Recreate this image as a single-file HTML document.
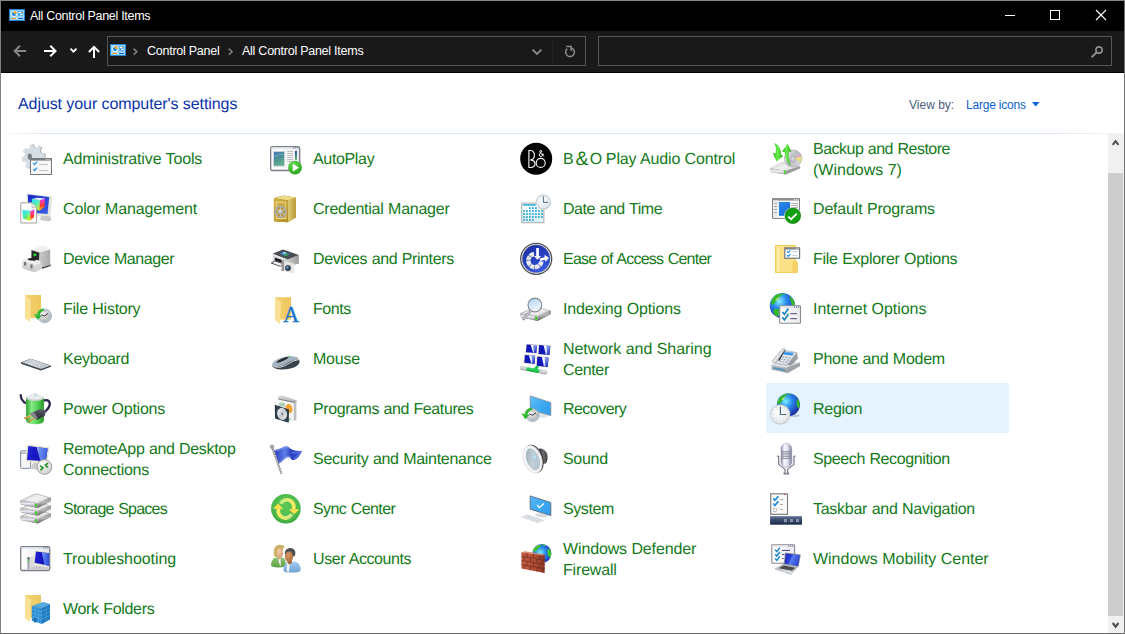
<!DOCTYPE html>
<html><head><meta charset="utf-8"><title>All Control Panel Items</title>
<style>
html,body{margin:0;padding:0;}
body{width:1125px;height:634px;overflow:hidden;background:#fff;position:relative;font-family:"Liberation Sans",sans-serif;}
.abs{position:absolute;}
.abs svg,svg.abs{display:block}
.ic{position:absolute;width:32px;height:32px;}
.ic svg{display:block;overflow:visible}
.lb{text-rendering:geometricPrecision;position:absolute;font-size:16px;line-height:20px;height:20px;color:#147a1a;white-space:nowrap;}
#title{position:absolute;left:0;top:0;width:1125px;height:31px;background:#000;}
#nav{position:absolute;left:0;top:31px;width:1125px;height:41px;background:#191919;border-bottom:1px solid #000;}
#frame{position:absolute;left:0;top:0;width:1123px;height:632px;border:1px solid;border-color:#858585 #727272 #6c6c6c #808080;pointer-events:none;z-index:10}
.wt{position:absolute;color:#fff;font-size:12.5px;white-space:nowrap;}
#addr{position:absolute;left:107px;top:36px;width:477px;height:28px;border:1px solid #555;}
#search{position:absolute;left:598px;top:36px;width:512px;height:28px;border:1px solid #555;}
#heading{text-rendering:geometricPrecision;position:absolute;left:18px;top:95px;letter-spacing:-0.08px;font-size:16px;line-height:20px;color:#0a34a8;white-space:nowrap;}
#sep{position:absolute;left:1px;top:133px;width:1123px;height:1px;background:linear-gradient(90deg,#ffffff 0%,#d8e5f4 4%,#d8e5f4 93%,#f6f9fd 100%);}
#hl{position:absolute;left:766px;top:383px;width:243px;height:50px;background:#e5f3ff;}
#sbar{position:absolute;left:1108px;top:134px;width:16px;height:499px;background:#f0f0f0;}
#thumb{position:absolute;left:1108px;top:173px;width:15px;height:443px;background:#cdcdcd;}

</style></head><body>
<div id="title"></div>
<div id="nav"></div>
<div class="abs" style="left:9px;top:9px;width:16px;height:12px"><svg width="16" height="12" viewBox="0 0 16 12"><rect x="0" y="0" width="16" height="12" fill="#2587d4"/><rect x="1" y="1" width="14" height="10" fill="#9ad4f8"/><rect x="9" y="2" width="5" height="5" fill="#5fb3ec"/><circle cx="5" cy="5" r="2.9" fill="#e8f4fd"/><circle cx="5" cy="5" r="2.1" fill="#1f86dc"/><path d="M5 5 L5 1.7 A3.3 3.3 0 0 1 8.1 4.4 Z" fill="#fbaa19"/><rect x="10" y="3" width="3" height="1" fill="#fff"/><rect x="12" y="3" width="1" height="1" fill="#f59a1a"/><rect x="11" y="5" width="2.4" height="1" fill="#fff"/><rect x="10" y="5" width="1" height="1" fill="#2a7fd0"/><rect x="2" y="9" width="5" height="1" fill="#f59a1a"/><rect x="7" y="9" width="1.6" height="1" fill="#fff"/><rect x="9" y="9" width="5" height="1" fill="#1565c8"/></svg></div>
<div class="wt" id="t1" style="left:30px;top:9px;letter-spacing:-0.3px">All Control Panel Items</div>
<svg class="abs" style="left:990px;top:1px" width="134" height="30" viewBox="0 0 134 30" fill="none" stroke="#fff" stroke-width="1">
<path d="M15 14.5 H25"/><rect x="60.5" y="9.5" width="9" height="9"/><path d="M106 9 L116 19 M116 9 L106 19" stroke-width="1.1"/></svg>
<svg class="abs" style="left:8px;top:38px" width="100" height="28" viewBox="0 0 100 28" fill="none" stroke-width="2">
<path d="M18.2 13 H7 M11.9 7.8 L6.7 13 L11.9 18.2" stroke="#858585"/>
<path d="M36 13 H47.2 M42.3 7.8 L47.5 13 L42.3 18.2" stroke="#fff"/>
<path d="M62.5 10.6 L65.5 13.6 L68.5 10.6" stroke="#fff" stroke-width="1.9"/>
<path d="M86 20 V9 M80.9 14 L86 8.9 L91.1 14" stroke="#fff"/>
</svg>
<div id="addr"></div>
<div id="search"></div>
<div class="abs" style="left:110px;top:44px;width:16px;height:12px"><svg width="16" height="12" viewBox="0 0 16 12"><rect x="0" y="0" width="16" height="12" fill="#2587d4"/><rect x="1" y="1" width="14" height="10" fill="#9ad4f8"/><rect x="9" y="2" width="5" height="5" fill="#5fb3ec"/><circle cx="5" cy="5" r="2.9" fill="#e8f4fd"/><circle cx="5" cy="5" r="2.1" fill="#1f86dc"/><path d="M5 5 L5 1.7 A3.3 3.3 0 0 1 8.1 4.4 Z" fill="#fbaa19"/><rect x="10" y="3" width="3" height="1" fill="#fff"/><rect x="12" y="3" width="1" height="1" fill="#f59a1a"/><rect x="11" y="5" width="2.4" height="1" fill="#fff"/><rect x="10" y="5" width="1" height="1" fill="#2a7fd0"/><rect x="2" y="9" width="5" height="1" fill="#f59a1a"/><rect x="7" y="9" width="1.6" height="1" fill="#fff"/><rect x="9" y="9" width="5" height="1" fill="#1565c8"/></svg></div>
<svg class="abs" style="left:130px;top:46px" width="110" height="12" viewBox="0 0 110 12" fill="none" stroke="#808080" stroke-width="1.6">
<path d="M3.6 2.6 L6.8 5.7 L3.6 8.8"/><path d="M98.8 2.6 L102 5.7 L98.8 8.8"/></svg>
<div class="wt" id="t2" style="left:147px;top:44px;letter-spacing:-0.25px">Control Panel</div>
<div class="wt" id="t3" style="left:242px;top:44px;letter-spacing:-0.25px">All Control Panel Items</div>
<svg class="abs" style="left:528px;top:40px" width="56" height="24" viewBox="0 0 56 24" fill="none" stroke="#8c8c8c" stroke-width="1.8">
<path d="M4.6 9.6 L9 14 L13.4 9.6"/>
<path d="M24.5 0 V24" stroke="#232323" stroke-width="1"/>
<path d="M43.2 7.9 A4.4 4.4 0 1 1 39.3 8.7" stroke-width="1.5"/><path d="M38.3 6.5 H43.2 V11" stroke-width="1.5"/></svg>
<svg class="abs" style="left:1089px;top:44px" width="16" height="16" viewBox="0 0 16 16" fill="none" stroke="#8f8f8f" stroke-width="1.6">
<circle cx="10" cy="6" r="3.1"/><path d="M7.6 8.4 L2.6 13.2" stroke-width="1.9"/></svg>
<div id="heading">Adjust your computer's settings</div>
<div class="abs" id="vb" style="left:909px;top:98px;font-size:12px;line-height:14px;color:#4c607a;white-space:nowrap">View by:</div>
<div class="abs" id="li" style="left:966px;top:98px;letter-spacing:-0.2px;font-size:12px;line-height:14px;color:#0b62d2;white-space:nowrap">Large icons</div>
<svg class="abs" style="left:1032px;top:102px" width="8" height="5" viewBox="0 0 8 5"><path d="M0 0 H7.4 L3.7 4.4 Z" fill="#0b62d2"/></svg>
<div id="sep"></div>
<div id="hl"></div>
<div id="sbar"></div>
<div id="thumb"></div>
<svg class="abs" style="left:1108px;top:134px" width="15" height="18" viewBox="0 0 15 18" fill="none" stroke="#505050" stroke-width="2.1"><path d="M4.7 10.9 L7.6 7.2 L10.5 10.9"/></svg>
<svg class="abs" style="left:1108px;top:616px" width="15" height="17" viewBox="0 0 15 17" fill="none" stroke="#505050" stroke-width="2.1"><path d="M4.7 7 L7.6 10.7 L10.5 7"/></svg>
<div id="frame"></div>

<div class="ic" style="left:20px;top:143px"><svg width="32" height="32" viewBox="0 0 32 32">
<path d="M10.6 5.3 L10.4 1.9 L14.0 1.2 L14.8 4.4 L17.4 5.0 L19.3 2.5 L22.3 4.8 L20.9 7.8 L22.3 10.2 L25.3 10.0 L25.9 14.0 L23.0 14.9 L22.4 17.7 L24.7 19.9 L22.6 23.2 L20.0 21.6 L17.8 23.1 L18.0 26.5 L14.4 27.2 L13.6 24.0 L11.0 23.4 L9.1 25.9 L6.1 23.6 L7.5 20.6 L6.1 18.2 L3.1 18.4 L2.5 14.4 L5.4 13.5 L6.0 10.7 L3.7 8.5 L5.8 5.2 L8.4 6.8Z" fill="#a4abb2"/>
<path d="M9.6 5.3 L9.4 1.9 L13.0 1.2 L13.8 4.4 L16.4 5.0 L18.3 2.5 L21.3 4.8 L19.9 7.8 L21.3 10.2 L24.3 10.0 L24.9 14.0 L22.0 14.9 L21.4 17.7 L23.7 19.9 L21.6 23.2 L19.0 21.6 L16.8 23.1 L17.0 26.5 L13.4 27.2 L12.6 24.0 L10.0 23.4 L8.1 25.9 L5.1 23.6 L6.5 20.6 L5.1 18.2 L2.1 18.4 L1.5 14.4 L4.4 13.5 L5.0 10.7 L2.7 8.5 L4.8 5.2 L7.4 6.8Z" fill="#d6dde4"/>
<ellipse cx="9.8" cy="13.6" rx="2.1" ry="3.2" fill="#7b7f84"/>
<rect x="10.5" y="15.5" width="21" height="16" fill="#f7f7f7" stroke="#777b80" stroke-width="1"/>
<rect x="11" y="16" width="20" height="1.6" fill="#777b80"/>
<rect x="25.6" y="16.3" width="1" height="0.9" fill="#fff"/><rect x="27.4" y="16.3" width="1" height="0.9" fill="#fff"/><rect x="29.2" y="16.3" width="1" height="0.9" fill="#fff"/>
<path d="M13.2 20 L14.6 21.5 L17.2 18.6" fill="none" stroke="#2f96ef" stroke-width="1.3"/>
<path d="M13.2 26 L14.6 27.5 L17.2 24.6" fill="none" stroke="#2f96ef" stroke-width="1.3"/>
<rect x="19" y="21" width="9" height="1" fill="#c2c4c6"/><rect x="19" y="27" width="9" height="1" fill="#c2c4c6"/>
</svg></div>
<div class="lb" style="left:63px;top:150px;letter-spacing:-0.15px;word-spacing:0.15px">Administrative Tools</div>
<div class="ic" style="left:20px;top:193px"><svg width="32" height="32" viewBox="0 0 32 32">
<defs>
<linearGradient id="cmL" x1="0" y1="0" x2="1" y2="0"><stop offset="0" stop-color="#19e04a"/><stop offset="1" stop-color="#f4f41a"/></linearGradient>
<linearGradient id="cmT" x1="0" y1="0" x2="0.3" y2="1"><stop offset="0" stop-color="#35e8ff"/><stop offset="0.45" stop-color="#35e8ff" stop-opacity="0.7"/><stop offset="1" stop-color="#35e8ff" stop-opacity="0"/></linearGradient>
<linearGradient id="cmR" x1="0" y1="0" x2="0" y2="1"><stop offset="0" stop-color="#f23cf0"/><stop offset="0.6" stop-color="#ff3a2a"/><stop offset="1" stop-color="#ffd21a"/></linearGradient>
<linearGradient id="cmS" x1="0" y1="0" x2="1" y2="1"><stop offset="0" stop-color="#1527c8"/><stop offset="1" stop-color="#3c62e6"/></linearGradient>
</defs>
<path d="M21 22 L30 22 L31.5 27 L29 28.5 L20 27 Z" fill="#c9c9c7"/>
<path d="M6.3 0.2 L32 3.4 L30.6 23 L7.2 23 Z" fill="#e4e4de"/>
<path d="M7.8 1.4 L29.2 4 L27.6 21 L8.6 19.6 Z" fill="url(#cmS)"/>
<g>
<path d="M11.8 6 L20 7.2 L19.6 17.8 L12.6 15.6 Z" fill="url(#cmL)"/><path d="M11.8 6 L20 7.2 L19.6 17.8 L12.6 15.6 Z" fill="url(#cmT)"/>
<path d="M20 7.2 L25 5.6 L24.6 13.8 L19.6 17.8 Z" fill="url(#cmR)"/>
<path d="M11.8 6 L17.4 4.8 L25 5.6 L20 7.2 Z" fill="#d9f3ff"/>
</g>
<path d="M0.8 9.8 H12 L16.6 14.4 V30 H0.8 Z" fill="#fdfdfd" stroke="#a3a3a3" stroke-width="1"/>
<path d="M12 9.8 V14.4 H16.6" fill="#ececec" stroke="#b5b5b5" stroke-width="0.8"/>
<g>
<path d="M2.6 17 L10.4 17.8 L10 27.8 L3.2 25.6 Z" fill="url(#cmL)"/><path d="M2.6 17 L10.4 17.8 L10 27.8 L3.2 25.6 Z" fill="url(#cmT)"/>
<path d="M10.4 17.8 L14.4 16.6 L14 24.6 L10 27.8 Z" fill="url(#cmR)"/>
<path d="M2.6 17 L7.4 16 L14.4 16.6 L10.4 17.8 Z" fill="#d9f3ff"/>
</g>
</svg></div>
<div class="lb" style="left:63px;top:200px;letter-spacing:-0.133px;word-spacing:0.133px">Color Management</div>
<div class="ic" style="left:20px;top:243px"><svg width="32" height="32" viewBox="0 0 32 32">
<defs><linearGradient id="dmR" x1="0" y1="0" x2="1" y2="0"><stop offset="0" stop-color="#c9c9cb"/><stop offset="1" stop-color="#a9a9ac"/></linearGradient>
<linearGradient id="dmF" x1="0" y1="0" x2="0" y2="1"><stop offset="0" stop-color="#e6e6e6"/><stop offset="1" stop-color="#c3c3c5"/></linearGradient></defs>
<path d="M22 24.2 L30.6 21.6 L30.6 23 L22 25.8 Z" fill="#2b2b2b"/>
<path d="M11.4 6.8 L22.4 2.8 Q28 3.4 30.2 6.6 L19.4 9.6 Z" fill="#efefef"/>
<path d="M19.4 9.6 L30.2 6.6 L30.2 22 L21.4 24.6 L19.4 18 Z" fill="url(#dmR)"/>
<path d="M11.4 6.9 L19.4 9.6 L19.2 17.4 L11.4 15.8 Z" fill="#3b3b3d"/>
<path d="M12.4 8.4 L18.4 10.4 L18.3 16.4 L12.4 15.2 Z" fill="#232325"/>
<rect x="13.5" y="10.4" width="2.8" height="2.8" fill="#22d63c"/>
<path d="M2.2 17.2 L8 15.2 L21.6 19.8 L15.6 22 Z" fill="#ededed"/>
<path d="M7.2 15.8 L11.4 15 L16.8 16.4 L15 17.8 L9 17.2 Z" fill="#1d1d1d"/>
<path d="M2.2 17.2 L15.6 22 L15.6 29.2 Q8 28 2.2 25 Z" fill="url(#dmF)"/>
<path d="M15.6 22 L21.6 19.8 L21.8 25.8 L15.6 29.2 Z" fill="#d5d5d7"/>
<rect x="4" y="18.8" width="2.2" height="4" rx="1" fill="#77777a"/>
<rect x="10.4" y="21.2" width="2.2" height="4.2" rx="1" fill="#77777a"/>
</svg></div>
<div class="lb" style="left:63px;top:250px;letter-spacing:-0.401px;word-spacing:0.401px">Device Manager</div>
<div class="ic" style="left:20px;top:293px"><svg width="32" height="32" viewBox="0 0 32 32">
<defs><linearGradient id="fhB" x1="0" y1="0" x2="1" y2="0"><stop offset="0" stop-color="#f3d272"/><stop offset="1" stop-color="#eec65c"/></linearGradient>
<radialGradient id="fhC" cx="0.35" cy="0.3" r="0.8"><stop offset="0" stop-color="#f2f2f2"/><stop offset="1" stop-color="#b4b4b4"/></radialGradient></defs>
<rect x="5.2" y="2" width="15.8" height="23" fill="url(#fhB)"/>
<path d="M5.2 2 L10.9 7.2 L10.2 29 L5.2 25.4 Z" fill="#f9e296"/>
<circle cx="24.7" cy="22.9" r="7" fill="#b3c4d2" stroke="#8fa2b2" stroke-width="0.5"/>
<circle cx="24.7" cy="22.9" r="5.7" fill="url(#fhC)"/>
<g stroke="#8a8a8a" stroke-width="0.8"><path d="M24.7 18 v1.2 M24.7 26.6 v1.2 M19.8 22.9 h1.2 M28.4 22.9 h1.2"/></g>
<path d="M21.6 22 L24.7 23 L28 20.4" fill="none" stroke="#333" stroke-width="1"/>
<path d="M23.4 15.4 Q17.6 16.4 16.8 21.6 L14 20.8 L17.4 26.8 L22 22.8 L19.6 22.2 Q20.2 18.6 24.2 17.6 Z" fill="#2db32d"/>
<path d="M23.4 15.4 Q17.6 16.4 16.8 21.6 L14 20.8 L15 22.6 L17.8 23 Q18 17.6 23.4 15.4 Z" fill="#5fd25a" opacity="0.7"/>
</svg></div>
<div class="lb" style="left:63px;top:300px;letter-spacing:-0.241px;word-spacing:0.241px">File History</div>
<div class="ic" style="left:20px;top:343px"><svg width="32" height="32" viewBox="0 0 32 32">
<defs><linearGradient id="kbT" x1="0" y1="0" x2="1" y2="0.3"><stop offset="0" stop-color="#a4abb2"/><stop offset="0.45" stop-color="#ccd1d5"/><stop offset="1" stop-color="#b3b9bf"/></linearGradient></defs>
<path d="M1 19.2 L10.6 15.8 L31 22.4 L31 23.8 L20.8 27.6 L1 20.8 Z" fill="#34404a"/>
<path d="M1.2 19.2 L10.6 15.8 L31 22.4 L20.8 26 Z" fill="url(#kbT)"/>
<g stroke="#e9ecee" stroke-width="0.9" stroke-dasharray="1.4 1.5" fill="none">
<path d="M9.6 17.3 L28 23.2"/><path d="M7.4 18.3 L25.8 24.2"/><path d="M5.2 19.3 L22.6 25"/></g>
</svg></div>
<div class="lb" style="left:63px;top:350px;letter-spacing:-0.286px;word-spacing:0.286px">Keyboard</div>
<div class="ic" style="left:20px;top:393px"><svg width="32" height="32" viewBox="0 0 32 32">
<defs><linearGradient id="pwG" x1="0" y1="0" x2="1" y2="0"><stop offset="0" stop-color="#27a027"/><stop offset="0.3" stop-color="#8aea8a"/><stop offset="0.7" stop-color="#4ccb4c"/><stop offset="1" stop-color="#229422"/></linearGradient>
<linearGradient id="pwP" x1="0" y1="0" x2="0" y2="1"><stop offset="0" stop-color="#5e5e6a"/><stop offset="1" stop-color="#26262e"/></linearGradient>
<linearGradient id="pwA" x1="0" y1="0" x2="0" y2="1"><stop offset="0" stop-color="#f0cc80"/><stop offset="1" stop-color="#b07a22"/></linearGradient></defs>
<path d="M0.6 1.2 Q0.8 7.8 6 10.2" fill="none" stroke="#2b264e" stroke-width="2.2"/>
<path d="M23.4 7.6 Q28.6 6 29.8 10.2 Q30.2 14.4 25 18.6" fill="none" stroke="#2b264e" stroke-width="2.4"/>
<path d="M6.1 5 V27.6 Q6.1 31.2 15 31.2 Q23.9 31.2 23.9 27.6 V5 Z" fill="url(#pwG)"/>
<ellipse cx="15" cy="4.8" rx="8.9" ry="3" fill="#cfd3d6"/>
<ellipse cx="15" cy="4.2" rx="7" ry="2.2" fill="#eceef0"/>
<ellipse cx="15" cy="2.2" rx="3.8" ry="1.7" fill="#f6f7f8" stroke="#c2c6ca" stroke-width="0.4"/>
<ellipse cx="15.4" cy="1.9" rx="1.3" ry="0.6" fill="#6ebcec"/>
<path d="M4 24.4 L11 21.6 L11.8 23.4 L4.8 26.4 Z" fill="url(#pwA)"/>
<path d="M8 27.2 L15 23.8 L15.8 25.6 L8.8 29.2 Z" fill="url(#pwA)"/>
<path d="M10.2 20.8 L18.6 16.4 Q22 15.8 26 18 L24.6 23 L17 26.8 L13.8 24.8 Z" fill="url(#pwP)"/>
<path d="M10.2 20.8 L13.8 19 L17.4 24.2 L17 26.8 L13.8 24.8 Z" fill="#858590"/>
</svg></div>
<div class="lb" style="left:63px;top:400px;letter-spacing:-0.247px;word-spacing:0.247px">Power Options</div>
<div class="ic" style="left:20px;top:443px"><svg width="32" height="32" viewBox="0 0 32 32">
<defs><linearGradient id="raS" x1="0" y1="0" x2="1" y2="0.1"><stop offset="0" stop-color="#2222d8"/><stop offset="1" stop-color="#0c0ea8"/></linearGradient>
<linearGradient id="raL" x1="0" y1="0" x2="1" y2="0.2"><stop offset="0" stop-color="#b9cdf8"/><stop offset="0.25" stop-color="#6f92ee"/><stop offset="1" stop-color="#3d5fe0"/></linearGradient>
<radialGradient id="raB" cx="0.35" cy="0.3" r="0.9"><stop offset="0" stop-color="#ffffff"/><stop offset="1" stop-color="#c4c4c4"/></radialGradient></defs>
<rect x="0.6" y="7.8" width="10" height="17.6" rx="0.8" fill="#f7f7f7" stroke="#7f8aa0" stroke-width="1"/>
<rect x="1" y="9.6" width="9" height="0.9" fill="#6f7a92"/>
<path d="M13 19.4 L17.4 19.6 L19 27.6 L10.6 25.6 Z" fill="#cdcdcd"/>
<path d="M6.8 1.4 L29.4 4.3 L27.1 20 L5.5 18.4 Z" fill="#e4e2d2"/>
<path d="M8.3 2.9 L27.6 5.4 L25.8 18.2 L7 16.9 Z" fill="url(#raS)"/>
<path d="M16.6 4 L27.6 5.4 L25.8 18.2 L20.2 17.8 Z" fill="url(#raL)"/>
<circle cx="24.4" cy="24" r="7.4" fill="url(#raB)" stroke="#9a9a9a" stroke-width="0.9"/>
<path d="M20.2 22.6 L23 24.8 L20.4 27.4 M28 20.2 L25.4 22.2 L27.8 24.6" fill="none" stroke="#2c962c" stroke-width="1.7"/>
</svg></div>
<div class="lb" style="left:63px;top:440px;letter-spacing:-0.333px;word-spacing:0.333px">RemoteApp and Desktop</div>
<div class="lb" style="left:63px;top:461px;letter-spacing:-0.28px;word-spacing:0.28px">Connections</div>
<div class="ic" style="left:20px;top:493px"><svg width="32" height="32" viewBox="0 0 32 32">
<defs>
<linearGradient id="stT" x1="0" y1="0" x2="1" y2="1"><stop offset="0" stop-color="#d5d5d5"/><stop offset="0.5" stop-color="#f2f2f2"/><stop offset="1" stop-color="#dcdcdc"/></linearGradient>
<linearGradient id="stF" x1="0" y1="0" x2="0" y2="1"><stop offset="0" stop-color="#a2a2a6"/><stop offset="0.45" stop-color="#e9e9f2"/><stop offset="1" stop-color="#8e8e92"/></linearGradient>
<linearGradient id="stR" x1="0" y1="0" x2="0" y2="1"><stop offset="0" stop-color="#8c8c8e"/><stop offset="0.45" stop-color="#b9b9bb"/><stop offset="1" stop-color="#5e5e62"/></linearGradient>
</defs><g transform="translate(0 15.6)">
<path d="M0.6 7.4 Q0.2 9 1 11.4 L17.6 15 L30.6 8.4 Q31.4 6.4 30.6 4.6 L17.6 10.8 Z" fill="#6e6e72"/>
<path d="M17.6 10.8 L30.6 4.6 Q31.2 6.4 30.6 8.2 L17.6 14.8 Z" fill="url(#stR)"/>
<path d="M0.6 7.2 Q0 9 1 11.2 L17.6 14.8 L17.6 10.8 Z" fill="url(#stF)"/>
<path d="M0.6 7.2 L14.6 0.6 Q16 0.2 17.4 0.6 L30.6 4.6 L17.6 10.8 Z" fill="#c4c4c6"/><path d="M3.6 7 L15.2 1.6 Q16 1.3 17 1.6 L27.8 4.8 L17.4 9.7 Z" fill="url(#stT)"/>
<rect x="15.2" y="10.6" width="1.9" height="3.4" fill="#35d312"/>
<rect x="14.7" y="10.5" width="0.5" height="3.4" fill="#7a4a9a" opacity="0.6"/>
</g><g transform="translate(0 7.8)">
<path d="M0.6 7.4 Q0.2 9 1 11.4 L17.6 15 L30.6 8.4 Q31.4 6.4 30.6 4.6 L17.6 10.8 Z" fill="#6e6e72"/>
<path d="M17.6 10.8 L30.6 4.6 Q31.2 6.4 30.6 8.2 L17.6 14.8 Z" fill="url(#stR)"/>
<path d="M0.6 7.2 Q0 9 1 11.2 L17.6 14.8 L17.6 10.8 Z" fill="url(#stF)"/>
<path d="M0.6 7.2 L14.6 0.6 Q16 0.2 17.4 0.6 L30.6 4.6 L17.6 10.8 Z" fill="#c4c4c6"/><path d="M3.6 7 L15.2 1.6 Q16 1.3 17 1.6 L27.8 4.8 L17.4 9.7 Z" fill="url(#stT)"/>
<rect x="15.2" y="10.6" width="1.9" height="3.4" fill="#35d312"/>
<rect x="14.7" y="10.5" width="0.5" height="3.4" fill="#7a4a9a" opacity="0.6"/>
</g><g transform="translate(0 0)">
<path d="M0.6 7.4 Q0.2 9 1 11.4 L17.6 15 L30.6 8.4 Q31.4 6.4 30.6 4.6 L17.6 10.8 Z" fill="#6e6e72"/>
<path d="M17.6 10.8 L30.6 4.6 Q31.2 6.4 30.6 8.2 L17.6 14.8 Z" fill="url(#stR)"/>
<path d="M0.6 7.2 Q0 9 1 11.2 L17.6 14.8 L17.6 10.8 Z" fill="url(#stF)"/>
<path d="M0.6 7.2 L14.6 0.6 Q16 0.2 17.4 0.6 L30.6 4.6 L17.6 10.8 Z" fill="#c4c4c6"/><path d="M3.6 7 L15.2 1.6 Q16 1.3 17 1.6 L27.8 4.8 L17.4 9.7 Z" fill="url(#stT)"/>
<rect x="15.2" y="10.6" width="1.9" height="3.4" fill="#35d312"/>
<rect x="14.7" y="10.5" width="0.5" height="3.4" fill="#7a4a9a" opacity="0.6"/>
</g></svg></div>
<div class="lb" style="left:63px;top:500px;letter-spacing:-0.759px;word-spacing:0.759px">Storage Spaces</div>
<div class="ic" style="left:20px;top:543px"><svg width="32" height="32" viewBox="0 0 32 32">
<defs><linearGradient id="trW" x1="0" y1="0" x2="1" y2="0"><stop offset="0" stop-color="#ffffff"/><stop offset="1" stop-color="#e4e4e6"/></linearGradient>
<linearGradient id="trS" x1="0" y1="0" x2="1" y2="0.1"><stop offset="0" stop-color="#2020d6"/><stop offset="1" stop-color="#0c0ea8"/></linearGradient>
<linearGradient id="trL" x1="0" y1="0" x2="1" y2="0.2"><stop offset="0" stop-color="#a9c0f6"/><stop offset="0.3" stop-color="#5f84ea"/><stop offset="1" stop-color="#2f4fd8"/></linearGradient></defs>
<rect x="0.7" y="3.7" width="29" height="23.8" rx="1.4" fill="url(#trW)" stroke="#797d86" stroke-width="1.3"/>
<rect x="1.3" y="4.3" width="27.8" height="1.5" fill="#dde3ec"/>
<rect x="23.2" y="4.3" width="1.1" height="1" fill="#4c5b78"/><rect x="25.2" y="4.3" width="1.1" height="1" fill="#4c5b78"/><rect x="27.2" y="4.3" width="1.1" height="1" fill="#4c5b78"/>
<path d="M9.6 14.4 L14.6 12.6 L14.6 24 L9.6 26 Z" fill="#dcdcdc"/>
<rect x="7.4" y="14" width="2.2" height="12.4" rx="0.8" fill="#a3a3ad"/>
<rect x="7.6" y="14.4" width="1.8" height="2" fill="#55555c"/>
<rect x="7.8" y="16.4" width="1.5" height="1.6" fill="#35d035"/>
<path d="M10.6 25 L17 22.4 L28.6 24.4 L28.6 26.6 L10.6 26.6 Z" fill="#c9c9cb"/>
<path d="M15.2 7.4 L29.2 9.4 L29.2 23.8 L13.6 20.6 Z" fill="#dedccd"/>
<path d="M16 8.4 L29.1 10.3 L29.1 22.8 L14.6 19.8 Z" fill="url(#trS)"/>
<path d="M22 9.3 L29.1 10.3 L29.1 22.8 L24.4 21.8 Z" fill="url(#trL)"/>
</svg></div>
<div class="lb" style="left:63px;top:550px;letter-spacing:-0.072px;word-spacing:0.072px">Troubleshooting</div>
<div class="ic" style="left:20px;top:593px"><svg width="32" height="32" viewBox="0 0 32 32">
<defs><linearGradient id="wfB" x1="0" y1="0" x2="1" y2="0"><stop offset="0" stop-color="#f3d272"/><stop offset="1" stop-color="#eec65c"/></linearGradient></defs>
<rect x="5.2" y="2" width="15.8" height="23" fill="url(#wfB)"/>
<path d="M5.2 2 L10.9 7.2 L10.2 29 L5.2 25.4 Z" fill="#f9e296"/>
<path d="M11.8 13 L23.1 8.9 L30 11.1 L21.9 14.9 Z" fill="#4aa6de"/>
<path d="M11.8 13 L21.9 14.9 L21.9 31 L11.8 27.8 Z" fill="#2f8fd2"/>
<path d="M21.9 14.9 L30 11.1 L30 26.6 L21.9 31 Z" fill="#1f7bc0"/>
<g stroke="#7cc6ee" stroke-width="0.6" fill="none" opacity="0.55">
<path d="M11.8 16.6 L21.9 18.7 L30 14.8 M11.8 20.2 L21.9 22.5 L30 18.5 M11.8 23.8 L21.9 26.3 L30 22.2"/>
<path d="M15.2 13.7 V28.8 M18.6 14.3 V29.9 M26 13 V28.8"/>
<path d="M15.4 11.7 L25.6 13.2 M19.2 10.3 L27.8 12.1"/>
</g>
<rect x="14" y="25" width="2.2" height="4.4" fill="#1b67a8"/>
</svg></div>
<div class="lb" style="left:63px;top:600px;letter-spacing:-0.316px;word-spacing:0.316px">Work Folders</div>
<div class="ic" style="left:270px;top:143px"><svg width="32" height="32" viewBox="0 0 32 32">
<defs><linearGradient id="apW" x1="0" y1="0" x2="1" y2="0"><stop offset="0" stop-color="#ffffff"/><stop offset="1" stop-color="#ececee"/></linearGradient>
<linearGradient id="apI" x1="0" y1="0" x2="0.4" y2="1"><stop offset="0" stop-color="#4a78ba"/><stop offset="0.5" stop-color="#4a9098"/><stop offset="1" stop-color="#5fae88"/></linearGradient>
<linearGradient id="apV" x1="0" y1="0" x2="0" y2="1"><stop offset="0" stop-color="#1746a8"/><stop offset="1" stop-color="#5cba58"/></linearGradient>
<radialGradient id="apP" cx="0.4" cy="0.3" r="0.8"><stop offset="0" stop-color="#6fdc58"/><stop offset="1" stop-color="#1f9a14"/></radialGradient></defs>
<rect x="0.7" y="3.7" width="29" height="23.8" rx="1.4" fill="url(#apW)" stroke="#797d86" stroke-width="1.3"/>
<rect x="1.3" y="4.3" width="27.8" height="1.5" fill="#dde3ec"/>
<rect x="23.2" y="4.3" width="1.1" height="1" fill="#4c5b78"/><rect x="25.2" y="4.3" width="1.1" height="1" fill="#4c5b78"/><rect x="27.2" y="4.3" width="1.1" height="1" fill="#4c5b78"/>
<rect x="3.6" y="8.5" width="11" height="14.6" fill="url(#apI)" stroke="#d9d2ea" stroke-width="0.8"/>
<path d="M4 13.6 Q9 10.6 14.2 11.6" fill="none" stroke="#9fc4d8" stroke-width="0.6" opacity="0.8"/>
<g fill="#b4b4b6"><rect x="17.1" y="8.1" width="5.8" height="0.8"/><rect x="17.1" y="10.1" width="5.8" height="0.8"/><rect x="17.1" y="12.2" width="5.8" height="0.8"/><rect x="17.1" y="14.2" width="5.8" height="0.8"/><rect x="17.1" y="16.2" width="5.8" height="0.8"/><rect x="17.1" y="18.2" width="5.8" height="0.8"/></g>
<rect x="25" y="7.9" width="1.9" height="9" fill="url(#apV)"/>
<circle cx="25" cy="24.7" r="6.9" fill="url(#apP)"/>
<path d="M22.8 20.8 L29 24.7 L22.8 28.6 Z" fill="#fff"/>
</svg></div>
<div class="lb" style="left:313px;top:150px;letter-spacing:-0.344px;word-spacing:0.344px">AutoPlay</div>
<div class="ic" style="left:270px;top:193px"><svg width="32" height="32" viewBox="0 0 32 32">
<defs><linearGradient id="crF" x1="0" y1="0" x2="1" y2="1"><stop offset="0" stop-color="#d6b246"/><stop offset="1" stop-color="#b38c26"/></linearGradient>
<linearGradient id="crR" x1="0" y1="0" x2="1" y2="0"><stop offset="0" stop-color="#e0cc74"/><stop offset="1" stop-color="#ba9a3a"/></linearGradient>
<radialGradient id="crH" cx="0.4" cy="0.35" r="0.7"><stop offset="0" stop-color="#e6e6e6"/><stop offset="1" stop-color="#9c9c9c"/></radialGradient></defs>
<path d="M3.9 6.4 Q3.9 5 5.4 4.6 L13.7 2.6 L24.6 4.2 Q25.8 4.4 25.8 5.6 L25.8 24.6 L18.1 29.2 L5 28.6 Q3.9 28.4 3.9 27 Z" fill="#b8942e"/>
<path d="M4.2 5.2 L13.7 2.7 L25.6 4.5 L18.1 7.2 Z" fill="#ecdc88"/>
<path d="M3.9 6 L18.1 7.2 L18.1 29.2 L5 28.6 Q3.9 28.4 3.9 27 Z" fill="url(#crF)"/>
<path d="M18.1 7.2 L25.8 4.6 L25.8 24.6 L18.1 29.2 Z" fill="url(#crR)"/>
<rect x="6.4" y="9.2" width="9.4" height="16.4" fill="none" stroke="#efe09a" stroke-width="0.9"/>
<rect x="7.2" y="10" width="7.8" height="14.8" fill="#d0b048" opacity="0.6"/>
<circle cx="10.5" cy="18.7" r="5.4" fill="#b9962f" stroke="#a9a9a9" stroke-width="1.7"/>
<g stroke="#bdbdbd" stroke-width="1.1"><path d="M10.5 13.6 V23.8 M6.1 16.2 L14.9 21.2 M6.1 21.2 L14.9 16.2"/></g>
<circle cx="10.5" cy="18.7" r="2.5" fill="url(#crH)"/>
</svg></div>
<div class="lb" style="left:313px;top:200px;letter-spacing:-0.234px;word-spacing:0.234px">Credential Manager</div>
<div class="ic" style="left:270px;top:243px"><svg width="32" height="32" viewBox="0 0 32 32">
<defs><linearGradient id="dpR" x1="0" y1="0" x2="1" y2="0"><stop offset="0" stop-color="#c6c6c8"/><stop offset="1" stop-color="#9c9c9f"/></linearGradient>
<radialGradient id="dpL" cx="0.4" cy="0.4" r="0.7"><stop offset="0" stop-color="#7fb4d8"/><stop offset="0.5" stop-color="#2e3e52"/><stop offset="1" stop-color="#15171a"/></radialGradient></defs>
<path d="M2.6 10.8 L13 6.6 L28.8 12 L28.8 20.4 L17.5 23.6 L2.9 18.4 Z" fill="#d9d9db"/>
<path d="M17.5 16.5 L28.8 12 L28.8 20.4 L17.5 23.6 Z" fill="url(#dpR)"/>
<path d="M2.6 10.8 L13 6.6 L28.8 12 L17.5 16.5 Z" fill="#4a4e53"/>
<path d="M2.6 10.8 L17.5 16.5 L17.5 17.4 L2.6 11.7 Z" fill="#f0f0f0"/>
<path d="M9.6 10.6 L14.6 9 L20 11.2 L15.4 13 Z" fill="#3c8be2"/>
<path d="M13.4 11.6 L16.6 10.4 L19 11.4 L15.4 13 Z" fill="#3aa04a"/>
<path d="M12.4 9.8 L14.6 9.1 L16.4 9.9 L14 10.8 Z" fill="#d8ecfa"/>
<path d="M4.8 14.4 L12.6 17.2 L12.6 20.2 L4.8 17.4 Z" fill="#1c1d20"/>
<path d="M1.2 20 L5 18 L13.2 20.6 L10.4 23.4 Z" fill="#f4f4f4" stroke="#3e4146" stroke-width="0.9"/>
<rect x="15.7" y="15.6" width="1.1" height="1.1" fill="#2fd04a"/>
<rect x="11.5" y="17.2" width="2.8" height="10.8" fill="#98989b"/>
<path d="M14.3 18 L24.4 20.6 L24.4 30.4 L14.3 28 Z" fill="#e9e9eb"/>
<path d="M11.5 17.2 L14.3 18 L24.4 20.6 L22 19 L13.4 16.8 Z" fill="#c9c9cb"/>
<circle cx="17.9" cy="25" r="3.5" fill="#b9b9bb"/>
<circle cx="17.9" cy="25" r="2.7" fill="url(#dpL)"/>
<rect x="20.6" y="20.6" width="2" height="0.9" fill="#d8c27a"/>
</svg></div>
<div class="lb" style="left:313px;top:250px;letter-spacing:-0.381px;word-spacing:0.381px">Devices and Printers</div>
<div class="ic" style="left:270px;top:293px"><svg width="32" height="32" viewBox="0 0 32 32">
<defs><linearGradient id="foB" x1="0" y1="0" x2="1" y2="0"><stop offset="0" stop-color="#f3d272"/><stop offset="1" stop-color="#eec65c"/></linearGradient></defs>
<rect x="5.2" y="4.2" width="15.8" height="22.4" fill="url(#foB)"/>
<path d="M5.2 4.2 L10.9 9 L10 31 L5.2 27.2 Z" fill="#f9e296"/>
<text x="12.9" y="28.8" font-family="Liberation Serif, serif" font-size="22.5" fill="#1474cc" stroke="#1474cc" stroke-width="0.35">A</text>
</svg></div>
<div class="lb" style="left:313px;top:300px;letter-spacing:-0.45px;word-spacing:0.45px">Fonts</div>
<div class="ic" style="left:270px;top:343px"><svg width="32" height="32" viewBox="0 0 32 32">
<defs><linearGradient id="moT" x1="0" y1="0" x2="1" y2="1"><stop offset="0" stop-color="#b7c4d0"/><stop offset="1" stop-color="#8fa0b0"/></linearGradient></defs>
<path d="M2.2 22 Q2 25 8 26.2 Q16 27.4 24 24.4 Q30 21.8 29.6 18 Q29 15 24 14 L10 20 Z" fill="#39424a"/>
<path d="M2.2 21.4 Q2 18.8 9 15.6 Q17 12.4 23 13.2 Q28.6 14 28.6 16.4 Q21 17 16 21 Q11 24.6 5 23.8 Q2.4 23.2 2.2 21.4 Z" fill="url(#moT)"/>
<path d="M2.4 22.2 Q4 24.6 10 24.2 Q15 23.4 19 20.4 Q24 17 28.8 16.6" fill="none" stroke="#e3e8ec" stroke-width="0.9"/>
<path d="M6.4 19.8 Q6.8 18 11 16 Q15.6 13.8 18.8 13.8 Q18 15.6 13.4 17.8 Q8.6 20.2 6.4 19.8 Z" fill="#262a2e"/>
<rect x="18.4" y="13" width="1.6" height="1.1" fill="#2fd34a"/>
</svg></div>
<div class="lb" style="left:313px;top:350px;letter-spacing:-0.25px;word-spacing:0.25px">Mouse</div>
<div class="ic" style="left:270px;top:393px"><svg width="32" height="32" viewBox="0 0 32 32">
<defs><linearGradient id="prD" x1="0" y1="0" x2="1" y2="1"><stop offset="0" stop-color="#fafafa"/><stop offset="0.5" stop-color="#c9cdd0"/><stop offset="1" stop-color="#eef0f1"/></linearGradient>
<linearGradient id="prT" x1="0" y1="0" x2="0" y2="1"><stop offset="0" stop-color="#e2e2e2"/><stop offset="1" stop-color="#a9a9ab"/></linearGradient></defs>
<path d="M8.3 6.4 L23.8 9.6 L23.8 28.4 L8.3 24 Z" fill="#f5f5f5"/>
<path d="M23.8 9.6 L26.4 8.4 L26.4 26.4 L23.8 28.4 Z" fill="#bfbfc1"/>
<path d="M8 3.4 L12.4 2.3 L27.6 7.8 L24.4 9.9 L8.2 6.6 Z" fill="url(#prT)"/>
<path d="M8.4 6 L24.2 9.4" stroke="#6a6a6c" stroke-width="0.7"/>
<path d="M8.6 10.6 Q11 9 14.8 10 L15 14 L8.6 12.4 Z" fill="#a9ceb2"/>
<ellipse cx="19" cy="15.6" rx="3.3" ry="4.7" fill="#f1a433" transform="rotate(-12 19 15.6)"/>
<path d="M18.8 25 L20.4 25.4 L20.4 28 L18.8 27.6 Z" fill="#8fc49a"/>
<path d="M4.8 11.7 L19 16.5 L18.7 29.8 L5.1 25.6 Z" fill="#27333f"/>
<path d="M5.8 13.2 L18 17.2 L17.8 28.4 L6 24.6 Z" fill="#34434f"/>
<ellipse cx="12.1" cy="20.9" rx="4.9" ry="6.1" fill="url(#prD)" transform="rotate(-14 12.1 20.9)"/>
<ellipse cx="12.2" cy="21" rx="1.1" ry="1.5" fill="#8a9298" transform="rotate(-14 12.2 21)"/>
</svg></div>
<div class="lb" style="left:313px;top:400px;letter-spacing:-0.403px;word-spacing:0.403px">Programs and Features</div>
<div class="ic" style="left:270px;top:443px"><svg width="32" height="32" viewBox="0 0 32 32">
<defs><linearGradient id="seF" x1="0" y1="0" x2="1" y2="0"><stop offset="0" stop-color="#2136b4"/><stop offset="0.42" stop-color="#5f7fea"/><stop offset="0.62" stop-color="#2a40c0"/><stop offset="1" stop-color="#3a56d6"/></linearGradient></defs>
<path d="M2.8 7.4 Q9 6.6 12.4 4.4 Q16.4 2.2 19.2 4.6 Q22.4 8.6 32 8 Q29 15.4 24.2 17 Q21.8 17.6 20.4 15.2 Q18.8 13 15.4 15.4 Q11 19.4 8 21.6 Z" fill="url(#seF)"/>
<path d="M3.6 8.4 Q9.4 7.6 12.8 5.4 Q16.2 3.4 18.6 5.4" fill="none" stroke="#8fa6f2" stroke-width="0.7"/>
<path d="M8.8 20 Q12 17.6 15 14.8 Q18.6 12 21 14.6" fill="none" stroke="#9fb4f6" stroke-width="0.7"/>
<path d="M21.4 9.6 Q26 10.4 30.4 9 Q27.8 14 24 15.6" fill="none" stroke="#7d96ee" stroke-width="0.7"/>
<path d="M2.2 4.6 L11.6 31" stroke="#8f8f93" stroke-width="2"/>
<path d="M2.2 4.6 L11.6 31" stroke="#f0f0f2" stroke-width="1" stroke-dasharray="1.3 1.3"/>
<circle cx="2" cy="3.8" r="1.7" fill="#a8a8ac" stroke="#77777b" stroke-width="0.6"/>
</svg></div>
<div class="lb" style="left:313px;top:450px;letter-spacing:-0.292px;word-spacing:0.292px">Security and Maintenance</div>
<div class="ic" style="left:270px;top:493px"><svg width="32" height="32" viewBox="0 0 32 32">
<defs><radialGradient id="syG" cx="0.5" cy="0.4" r="0.6"><stop offset="0" stop-color="#5cc85a"/><stop offset="0.8" stop-color="#4ab84a"/><stop offset="1" stop-color="#3aa63c"/></radialGradient>
<linearGradient id="syA" x1="0" y1="0" x2="1" y2="0"><stop offset="0" stop-color="#c6ec8a"/><stop offset="1" stop-color="#fdea62"/></linearGradient>
<linearGradient id="syB" x1="1" y1="0" x2="0" y2="0"><stop offset="0" stop-color="#c6ec8a"/><stop offset="1" stop-color="#fdea62"/></linearGradient></defs>
<circle cx="15.9" cy="15.8" r="14.8" fill="url(#syG)"/>
<path d="M10.6 10.8 A6.8 6.8 0 0 1 23.2 16.6" fill="none" stroke="url(#syA)" stroke-width="3.7"/>
<path d="M21.6 21 A6.8 6.8 0 0 1 9 15.2" fill="none" stroke="url(#syB)" stroke-width="3.7"/>
<path d="M18.8 16.2 H29.4 L24.1 21.2 Z" fill="#ffe04c"/>
<path d="M3 15.8 H13.4 L8 10.6 Z" fill="#ffe04c"/>
</svg></div>
<div class="lb" style="left:313px;top:500px;letter-spacing:-0.583px;word-spacing:0.583px">Sync Center</div>
<div class="ic" style="left:270px;top:543px"><svg width="32" height="32" viewBox="0 0 32 32">
<defs><linearGradient id="usG" x1="0" y1="0" x2="0" y2="1"><stop offset="0" stop-color="#8cc66e"/><stop offset="1" stop-color="#5fa04a"/></linearGradient>
<linearGradient id="usB" x1="0" y1="0" x2="0" y2="1"><stop offset="0" stop-color="#a6cdee"/><stop offset="1" stop-color="#6fa3d6"/></linearGradient>
<radialGradient id="usF1" cx="0.4" cy="0.4" r="0.7"><stop offset="0" stop-color="#f6d2b0"/><stop offset="1" stop-color="#d69c72"/></radialGradient>
<radialGradient id="usF2" cx="0.4" cy="0.4" r="0.7"><stop offset="0" stop-color="#d89a68"/><stop offset="1" stop-color="#a86a3a"/></radialGradient></defs>
<path d="M1 22.6 Q1 15.4 6.4 14.6 L12.4 14.4 Q16 15.4 16 22 Q16 24.4 8.4 24.4 Q1 24.4 1 22.6 Z" fill="url(#usG)"/>
<path d="M8 15 L10.6 15 L10.8 23.6 L9.4 21 Z" fill="#f2f2f2"/>
<path d="M3.8 11 Q3 3 9 1.8 Q13 1.6 14.8 3.4 Q12.6 5 12.6 8 Q13.6 11.6 12.2 13.8 L5.6 14 Q4 13.4 3.8 11 Z" fill="#c9b163"/>
<ellipse cx="9.6" cy="9.6" rx="3.1" ry="4.5" fill="url(#usF1)"/>
<path d="M8 13.4 H11.2 V15.6 L9.6 16.6 L8 15.6 Z" fill="#dca57c"/>
<path d="M13.4 27.4 Q13.4 19.6 19 19 L24.4 18.6 Q30.6 19.4 30.6 27 Q30.6 29.6 22 29.6 Q13.4 29.6 13.4 27.4 Z" fill="url(#usB)"/>
<path d="M17 19.6 L19.6 21.4 L19 29 L16.8 28.6 Z" fill="#f4f4f4"/>
<path d="M17.4 17.6 H22 V20 L19.6 21.6 L17.4 20 Z" fill="#a86a3c"/>
<path d="M14.8 10.4 Q15 5.2 20.4 5 Q25.6 5.4 25.4 11 L24.2 13.4 L15.4 11.8 Z" fill="#4b4f54"/>
<ellipse cx="19" cy="13.4" rx="4.1" ry="5.3" fill="url(#usF2)"/>
<path d="M14.9 10.6 Q17 7.6 21.6 8 Q23.6 9.6 23.4 13.4 L25 11.8 Q25.4 6.6 20.4 5.4 Q15.6 5.6 14.9 10.6 Z" fill="#4b4f54"/>
</svg></div>
<div class="lb" style="left:313px;top:550px;letter-spacing:-0.42px;word-spacing:0.42px">User Accounts</div>
<div class="ic" style="left:520px;top:143px"><svg width="32" height="32" viewBox="0 0 32 32">
<circle cx="16.2" cy="15.8" r="16" fill="#000"/>
<g fill="none" stroke="#fff" stroke-width="1.1">
<path d="M8.9 7.5 H10.4 Q14.4 7.8 14.4 12.2 Q14.4 16.4 10.4 16.9 Q15 17.4 15 21 Q15 24.2 10.4 24.5 H8.9 Z"/>
<circle cx="20.7" cy="19.9" r="4.5"/>
<path d="M23.8 13.4 L20 9.2 Q19.4 7.6 20.8 7.4 Q22.2 7.6 21.6 9 Q19.2 10.4 19.2 12 Q19.4 13.5 21 13.5 Q22.8 13.3 23.4 11 H21.8" stroke-width="0.95"/>
</g>
</svg></div>
<div class="lb" style="left:563px;top:150px;letter-spacing:-0.174px;word-spacing:0.174px">B<span id="amp" style="font-size:19.5px;line-height:0;letter-spacing:0;margin:0 1.3px 0 1.9px;position:relative;top:0.5px">&amp;</span>O<span id="pac" style="margin-left:-0.6px;letter-spacing:-0.15px"> Play Audio Control</span></div>
<div class="ic" style="left:520px;top:193px"><svg width="32" height="32" viewBox="0 0 32 32">
<defs><linearGradient id="dtC" x1="0" y1="0" x2="0" y2="1"><stop offset="0" stop-color="#ffffff"/><stop offset="1" stop-color="#d6eef6"/></linearGradient>
<radialGradient id="dtK" cx="0.4" cy="0.35" r="0.8"><stop offset="0" stop-color="#ffffff"/><stop offset="0.7" stop-color="#e4e8ec"/><stop offset="1" stop-color="#b9c4ce"/></radialGradient></defs>
<rect x="1.7" y="10.1" width="22.2" height="19.6" fill="url(#dtC)" stroke="#b2b2b4" stroke-width="1.1"/>
<rect x="2.8" y="11.1" width="13" height="1.6" fill="#2fb2da"/>
<g fill="#1fa5cd"><rect x="9.05" y="14.25" width="1.7" height="1.7"/><rect x="12.05" y="14.25" width="1.7" height="1.7"/><rect x="15.05" y="14.25" width="1.7" height="1.7"/><rect x="3.05" y="17.15" width="1.7" height="1.7"/><rect x="6.05" y="17.15" width="1.7" height="1.7"/><rect x="9.05" y="17.15" width="1.7" height="1.7"/><rect x="12.05" y="17.15" width="1.7" height="1.7"/><rect x="15.05" y="17.15" width="1.7" height="1.7"/><rect x="18.15" y="17.15" width="1.7" height="1.7"/><rect x="21.15" y="17.15" width="1.7" height="1.7"/><rect x="3.05" y="20.15" width="1.7" height="1.7"/><rect x="6.05" y="20.15" width="1.7" height="1.7"/><rect x="9.05" y="20.15" width="1.7" height="1.7"/><rect x="12.05" y="20.15" width="1.7" height="1.7"/><rect x="15.05" y="20.15" width="1.7" height="1.7"/><rect x="18.15" y="20.15" width="1.7" height="1.7"/><rect x="21.15" y="20.15" width="1.7" height="1.7"/><rect x="3.05" y="23.15" width="1.7" height="1.7"/><rect x="6.05" y="23.15" width="1.7" height="1.7"/><rect x="9.05" y="23.15" width="1.7" height="1.7"/><rect x="12.05" y="23.15" width="1.7" height="1.7"/><rect x="15.05" y="23.15" width="1.7" height="1.7"/><rect x="18.15" y="23.15" width="1.7" height="1.7"/><rect x="21.15" y="23.15" width="1.7" height="1.7"/><rect x="3.05" y="26.15" width="1.7" height="1.7"/><rect x="6.05" y="26.15" width="1.7" height="1.7"/><rect x="9.05" y="26.15" width="1.7" height="1.7"/><rect x="12.05" y="26.15" width="1.7" height="1.7"/></g>
<circle cx="23.4" cy="9.2" r="7.6" fill="#c2cdd8"/>
<circle cx="23.4" cy="9.2" r="6.5" fill="url(#dtK)"/>
<path d="M23.4 3.4 V9.4 H28" fill="none" stroke="#4d6c8a" stroke-width="1"/>
</svg></div>
<div class="lb" style="left:563px;top:200px;letter-spacing:-0.453px;word-spacing:0.453px">Date and Time</div>
<div class="ic" style="left:520px;top:243px"><svg width="32" height="32" viewBox="0 0 32 32">
<defs><linearGradient id="eaB" x1="0.2" y1="0" x2="0.8" y2="1"><stop offset="0" stop-color="#1d30a2"/><stop offset="0.6" stop-color="#2a44c6"/><stop offset="1" stop-color="#3c5ee6"/></linearGradient>
<linearGradient id="eaW" x1="0" y1="0" x2="0" y2="1"><stop offset="0" stop-color="#ffffff"/><stop offset="1" stop-color="#cfd0d4"/></linearGradient></defs>
<circle cx="16.2" cy="15.8" r="15.5" fill="#fff" stroke="#4e5156" stroke-width="1.3"/>
<circle cx="16.2" cy="15.8" r="14" fill="url(#eaB)" stroke="#8a8d92" stroke-width="0.5"/>
<g fill="url(#eaW)"><path d="M23.62 18.85 A8.8 8.8 0 0 1 21.03 24.01 L17.97 20.86 A4.4 4.4 0 0 0 19.26 18.27Z"/><path d="M20.46 24.52 A8.8 8.8 0 0 1 15.03 26.50 L14.96 22.10 A4.4 4.4 0 0 0 17.68 21.11Z"/><path d="M14.26 26.48 A8.8 8.8 0 0 1 8.95 24.19 L11.93 20.94 A4.4 4.4 0 0 0 14.58 22.09Z"/><path d="M8.41 23.65 A8.8 8.8 0 0 1 6.12 18.34 L10.51 18.02 A4.4 4.4 0 0 0 11.66 20.67Z"/><path d="M6.10 17.57 A8.8 8.8 0 0 1 8.08 12.14 L11.49 14.92 A4.4 4.4 0 0 0 10.50 17.64Z"/><path d="M8.59 11.57 A8.8 8.8 0 0 1 13.75 8.98 L14.33 13.34 A4.4 4.4 0 0 0 11.74 14.63Z"/></g>
<path d="M16.2 5 H18.9 V13 H21 L17.5 16.8 L14 13 H16.2 Z" fill="#fff"/>
<path d="M19.6 15.4 L24.6 14.2 V11.8 L29 15 L25.2 19 V16.8 L20.2 18 Z" fill="#fff"/>
</svg></div>
<div class="lb" style="left:563px;top:250px;letter-spacing:-0.763px;word-spacing:0.763px">Ease of Access Center</div>
<div class="ic" style="left:520px;top:293px"><svg width="32" height="32" viewBox="0 0 32 32">
<defs>
<linearGradient id="ixT" x1="0" y1="0" x2="1" y2="1"><stop offset="0" stop-color="#d5d5d5"/><stop offset="0.5" stop-color="#f2f2f2"/><stop offset="1" stop-color="#dcdcdc"/></linearGradient>
<linearGradient id="ixF" x1="0" y1="0" x2="0" y2="1"><stop offset="0" stop-color="#a2a2a6"/><stop offset="0.45" stop-color="#e9e9f2"/><stop offset="1" stop-color="#8e8e92"/></linearGradient>
<linearGradient id="ixR" x1="0" y1="0" x2="0" y2="1"><stop offset="0" stop-color="#8c8c8e"/><stop offset="0.45" stop-color="#b9b9bb"/><stop offset="1" stop-color="#5e5e62"/></linearGradient>
<linearGradient id="ixG" x1="0" y1="0" x2="0.3" y2="1"><stop offset="0" stop-color="#a9d0f4"/><stop offset="0.6" stop-color="#d6e8f8"/><stop offset="1" stop-color="#f0f6fc"/></linearGradient>
</defs><g transform="translate(0 12.9)">
<path d="M0.6 7.4 Q0.2 9 1 11.4 L17.6 15 L30.6 8.4 Q31.4 6.4 30.6 4.6 L17.6 10.8 Z" fill="#6e6e72"/>
<path d="M17.6 10.8 L30.6 4.6 Q31.2 6.4 30.6 8.2 L17.6 14.8 Z" fill="url(#ixR)"/>
<path d="M0.6 7.2 Q0 9 1 11.2 L17.6 14.8 L17.6 10.8 Z" fill="url(#ixF)"/>
<path d="M0.6 7.2 L14.6 0.6 Q16 0.2 17.4 0.6 L30.6 4.6 L17.6 10.8 Z" fill="#c4c4c6"/><path d="M3.6 7 L15.2 1.6 Q16 1.3 17 1.6 L27.8 4.8 L17.4 9.7 Z" fill="url(#ixT)"/>
<rect x="15.2" y="10.6" width="1.9" height="3.4" fill="#35d312"/>
<rect x="14.7" y="10.5" width="0.5" height="3.4" fill="#7a4a9a" opacity="0.6"/>
</g>
<path d="M10.4 18.4 L3.6 26" stroke="#8a8a8c" stroke-width="2.6" stroke-linecap="round"/>
<path d="M10.4 18.4 L3.8 25.8" stroke="#dadadc" stroke-width="1.2" stroke-linecap="round"/>
<circle cx="14.9" cy="12" r="6.9" fill="url(#ixG)" stroke="#85878a" stroke-width="1.1"/>
</svg></div>
<div class="lb" style="left:563px;top:300px;letter-spacing:-0.149px;word-spacing:0.149px">Indexing Options</div>
<div class="ic" style="left:520px;top:343px"><svg width="32" height="32" viewBox="0 0 32 32">
<defs><linearGradient id="nwL" x1="0" y1="0" x2="0.4" y2="1"><stop offset="0" stop-color="#a4baf6"/><stop offset="1" stop-color="#2436cc"/></linearGradient>
<linearGradient id="nwH" x1="0" y1="0" x2="0" y2="1"><stop offset="0" stop-color="#ffffff"/><stop offset="0.6" stop-color="#e4ebfc"/><stop offset="1" stop-color="#9fb2f2"/></linearGradient>
<linearGradient id="nwP" x1="0" y1="0" x2="0" y2="1"><stop offset="0" stop-color="#f0f2f4"/><stop offset="1" stop-color="#aab2ba"/></linearGradient>
<linearGradient id="nwG" x1="0" y1="0" x2="0" y2="1"><stop offset="0" stop-color="#3de06a"/><stop offset="1" stop-color="#0fa83a"/></linearGradient></defs>
<path d="M6 0.8 L17.4 1.4 L17 10.6 L5.2 10Z" fill="#e9e5d2"/><path d="M6.7 1.5 L16.7 2.1 L16.3 9.9 L5.9 9.3Z" fill="#1217b8"/><path d="M12.9 1.9 L16.7 2.1 L16.3 9.9 L14.0 9.8Z" fill="url(#nwL)"/><path d="M10.7 1.7 L13.3 1.9 L14.2 9.8 L13.0 9.7Z" fill="url(#nwH)"/><path d="M18.4 1.2 L31 2.2 L30 12.6 L17.8 11.6Z" fill="#e9e5d2"/><path d="M19.1 1.9 L30.3 2.9 L29.3 11.9 L18.5 10.9Z" fill="#1217b8"/><path d="M26.0 2.5 L30.3 2.9 L29.3 11.9 L26.9 11.7Z" fill="url(#nwL)"/><path d="M23.6 2.3 L26.5 2.6 L27.1 11.7 L25.8 11.6Z" fill="url(#nwH)"/><path d="M4.2 11.2 L15.8 12 L15.2 21.4 L3.6 20.4Z" fill="#e9e5d2"/><path d="M4.9 11.9 L15.1 12.7 L14.5 20.7 L4.3 19.7Z" fill="#1217b8"/><path d="M11.2 12.4 L15.1 12.7 L14.5 20.7 L12.3 20.5Z" fill="url(#nwL)"/><path d="M9.0 12.2 L11.6 12.4 L12.5 20.5 L11.2 20.4Z" fill="url(#nwH)"/><path d="M16.6 12.8 L29.2 14 L28.2 24.8 L16 23.4Z" fill="#e9e5d2"/><path d="M17.3 13.5 L28.5 14.7 L27.5 24.1 L16.7 22.7Z" fill="#1217b8"/><path d="M24.2 14.2 L28.5 14.7 L27.5 24.1 L25.1 23.8Z" fill="url(#nwL)"/><path d="M21.8 14.0 L24.7 14.3 L25.3 23.8 L24.0 23.7Z" fill="url(#nwH)"/>
<g transform="rotate(10.5 0.4 24.7)">
<rect x="0.4" y="23" width="7" height="3.6" rx="1.6" fill="url(#nwP)" stroke="#98a0a8" stroke-width="0.5"/>
<rect x="19" y="23" width="8.4" height="3.6" rx="1.6" fill="url(#nwP)" stroke="#98a0a8" stroke-width="0.5"/>
<rect x="6.6" y="22.8" width="13" height="4" rx="1.2" fill="url(#nwG)"/>
<path d="M13.4 23 L16.2 19.6 L18.6 20.4 L17.2 23.4 Z" fill="#1fc24e"/>
</g>
</svg></div>
<div class="lb" style="left:563px;top:340px;letter-spacing:-0.052px;word-spacing:0.052px">Network and Sharing</div>
<div class="lb" style="left:563px;top:361px;letter-spacing:-0.36px;word-spacing:0.36px">Center</div>
<div class="ic" style="left:520px;top:393px"><svg width="32" height="32" viewBox="0 0 32 32">
<defs><linearGradient id="reS" x1="0" y1="0" x2="1" y2="1"><stop offset="0" stop-color="#64c0f8"/><stop offset="0.5" stop-color="#3eaaf2"/><stop offset="1" stop-color="#2f9cec"/></linearGradient>
<radialGradient id="reC" cx="0.35" cy="0.3" r="0.8"><stop offset="0" stop-color="#f2f2f2"/><stop offset="1" stop-color="#b4b4b4"/></radialGradient></defs>
<path d="M19.4 20 L27.6 22 L27.6 24 Q23 25.4 19.4 24 Z" fill="#dfe4e8"/>
<path d="M10.2 2.9 L30.8 9.6 L30.8 22.6 L10.2 16.8 Z" fill="url(#reS)" stroke="#7d8c9a" stroke-width="0.8"/>
<circle cx="12.7" cy="22.1" r="6.6" fill="#b3c4d2" stroke="#8fa2b2" stroke-width="0.5"/>
<circle cx="12.7" cy="22.1" r="5.4" fill="url(#reC)"/>
<g stroke="#8a8a8a" stroke-width="0.8"><path d="M12.7 17.4 v1.2 M12.7 25.6 v1.2 M8 22.1 h1.2 M16.2 22.1 h1.2"/></g>
<path d="M9.8 21.2 L12.7 22.2 L16 19.6" fill="none" stroke="#333" stroke-width="1"/>
<path d="M11.6 14.6 Q5.8 15.6 4.4 21 L1.4 20.6 L5.4 26.2 L9.4 21.8 L7.2 21.4 Q8 17.8 12.4 16.8 Z" fill="#2db32d"/>
<path d="M11.6 14.6 Q5.8 15.6 4.4 21 L1.4 20.6 L2.6 22.2 L5.4 22.4 Q5.8 17 11.6 14.6 Z" fill="#5fd25a" opacity="0.7"/>
</svg></div>
<div class="lb" style="left:563px;top:400px;letter-spacing:-0.541px;word-spacing:0.541px">Recovery</div>
<div class="ic" style="left:520px;top:443px"><svg width="32" height="32" viewBox="0 0 32 32">
<defs><linearGradient id="soC" x1="0" y1="0" x2="1" y2="1"><stop offset="0" stop-color="#98a9b2"/><stop offset="0.5" stop-color="#c2d0d6"/><stop offset="1" stop-color="#adc0c9"/></linearGradient>
<linearGradient id="soM" x1="0" y1="0" x2="1" y2="0"><stop offset="0" stop-color="#3a3a3c"/><stop offset="0.5" stop-color="#6a6a6c"/><stop offset="1" stop-color="#3e3e40"/></linearGradient>
<radialGradient id="soD" cx="0.4" cy="0.4" r="0.7"><stop offset="0" stop-color="#d6eefa"/><stop offset="1" stop-color="#8fb4c8"/></radialGradient></defs>
<path d="M19 5.4 Q25 5 27.2 11 Q28.4 17 25.8 20.6 L21 21 Z" fill="url(#soM)"/>
<g transform="rotate(-19 12.9 16.1)">
<ellipse cx="14.2" cy="16.1" rx="8.9" ry="14.4" fill="#2f2f31"/>
<ellipse cx="13.4" cy="16.1" rx="8.9" ry="14.3" fill="#9a9a9c"/>
<ellipse cx="12.5" cy="16.1" rx="8.9" ry="14.2" fill="#f6f6f6" stroke="#cfcfd1" stroke-width="0.5"/>
<ellipse cx="12.9" cy="16.4" rx="6.5" ry="11.4" fill="url(#soC)"/>
<ellipse cx="15.4" cy="15.2" rx="2" ry="3" fill="url(#soD)"/>
</g>
</svg></div>
<div class="lb" style="left:563px;top:450px;letter-spacing:-0.3px;word-spacing:0.3px">Sound</div>
<div class="ic" style="left:520px;top:493px"><svg width="32" height="32" viewBox="0 0 32 32">
<defs><linearGradient id="syS" x1="0" y1="0" x2="1" y2="1"><stop offset="0" stop-color="#5ab8f8"/><stop offset="0.5" stop-color="#3ea8f2"/><stop offset="1" stop-color="#2f9cec"/></linearGradient></defs>
<path d="M15 21.4 Q17 19.6 21 20.4 L27.6 22.4 Q27.6 24.2 24 24.6 Q18 24.4 15 22.6 Z" fill="#d3dbe1"/>
<path d="M10.2 2.9 L30.8 9.6 L30.8 22.6 L10.2 16.2 Z" fill="url(#syS)" stroke="#5b6b79" stroke-width="0.9"/>
<path d="M17.2 11.8 L19.4 14.8 L23.8 10.6" fill="none" stroke="#fff" stroke-width="1.4"/>
<path d="M0.8 24.3 L7.4 21.5 L24.4 27.2 L17.6 30 Z" fill="#cdd4d9"/>
<g stroke="#eef1f3" stroke-width="0.9" stroke-dasharray="1.5 1.1" fill="none"><path d="M6.6 22.9 L22.4 28.1"/><path d="M4.8 23.7 L20.4 28.9"/><path d="M3 24.5 L18 29.4"/></g>
</svg></div>
<div class="lb" style="left:563px;top:500px;letter-spacing:-0.4px;word-spacing:0.4px">System</div>
<div class="ic" style="left:520px;top:543px"><svg width="32" height="32" viewBox="0 0 32 32">
<defs><radialGradient id="fwG" cx="0.42" cy="0.45" r="0.6"><stop offset="0" stop-color="#7af0ff"/><stop offset="0.45" stop-color="#2a8cf0"/><stop offset="1" stop-color="#1432b8"/></radialGradient>
<linearGradient id="fwW" x1="0" y1="0" x2="1" y2="0"><stop offset="0" stop-color="#c25a40"/><stop offset="0.6" stop-color="#b04a34"/><stop offset="1" stop-color="#8e3624"/></linearGradient>
<clipPath id="fwC"><circle cx="21.9" cy="10.5" r="9.5"/></clipPath></defs>
<circle cx="21.9" cy="10.5" r="9.5" fill="url(#fwG)"/>
<g clip-path="url(#fwC)" fill="#3fc42c">
<path d="M13 8 Q14 3.6 18.6 2 Q21 1.4 21.6 2.6 Q19.8 4.4 18.4 5 Q17 7.4 15.4 8.6 Q13.6 9.6 13 8 Z"/>
<path d="M27.6 5.6 Q30 6.4 31.2 9 Q32 12.6 30.8 14.4 Q28.6 14.6 28 12.4 Q27.2 9 27.6 5.6 Z"/>
<path d="M22.4 1.4 Q25 1.2 26 2.4 Q24.6 3.2 23 2.8 Z"/>
</g>
<path d="M1.4 9.3 L4.8 8.2 L25 11.5 L22 12.6 Z" fill="#d98a6a"/>
<path d="M1.4 9.3 L22 12.6 L24.8 11.6 L24.7 30 L1.4 25.6 Z" fill="url(#fwW)"/>
<g stroke="#5e2c20" stroke-width="0.7" fill="none" opacity="0.85">
<path d="M1.4 13.4 L24.7 17.2 M1.4 17.4 L24.7 21.5 M1.4 21.5 L24.7 25.8"/>
<path d="M7 10.3 V14.2 M13.4 11.3 V15.3 M19.6 12.3 V16.3 M4.2 13.9 V17.9 M10.4 14.9 V19 M16.8 15.9 V20.1 M22.6 16.9 V21.1 M7 18.4 V22.5 M13.4 19.5 V23.7 M19.6 20.6 V24.9 M4.2 22 V26.1 M10.4 23.1 V27.3 M16.8 24.3 V28.5 M22.6 25.4 V29.6"/>
</g>
</svg></div>
<div class="lb" style="left:563px;top:540px;letter-spacing:-0.133px;word-spacing:0.133px">Windows Defender</div>
<div class="lb" style="left:563px;top:561px;letter-spacing:-0.17px;word-spacing:0.17px">Firewall</div>
<div class="ic" style="left:770px;top:143px"><svg width="32" height="32" viewBox="0 0 32 32">
<defs>
<linearGradient id="bkT" x1="0" y1="0" x2="1" y2="1"><stop offset="0" stop-color="#d2d2d2"/><stop offset="0.5" stop-color="#f0f0f0"/><stop offset="1" stop-color="#d6d6d6"/></linearGradient>
<linearGradient id="bkF" x1="0" y1="0" x2="0" y2="1"><stop offset="0" stop-color="#b5b5b9"/><stop offset="0.45" stop-color="#efeff6"/><stop offset="1" stop-color="#a8a8ac"/></linearGradient>
<linearGradient id="bkD" x1="0" y1="0" x2="1" y2="1"><stop offset="0" stop-color="#f4f4f4"/><stop offset="0.5" stop-color="#b9bcc0"/><stop offset="1" stop-color="#e8e8ea"/></linearGradient>
<linearGradient id="bkG" x1="0" y1="0" x2="1" y2="0"><stop offset="0" stop-color="#27b013"/><stop offset="0.5" stop-color="#6cf050"/><stop offset="1" stop-color="#1f9a0f"/></linearGradient>
</defs>
<path d="M0.6 25.2 L11 19.8 Q12 19.4 13.4 19.6 L30 23 Q30.6 24 30 25.6 L16 31.6 L1 29.2 Q0.2 27 0.6 25.2 Z" fill="#9a9a9c"/>
<path d="M0.6 25.2 L11 19.8 Q12 19.4 13.4 19.6 L30 23 L16 27.8 Z" fill="url(#bkT)"/>
<path d="M0.6 25.2 L16 27.8 L16 31.6 L1 29.2 Q0.2 27 0.6 25.2 Z" fill="url(#bkF)"/>
<rect x="13.8" y="27.4" width="1.8" height="3.2" fill="#35d312"/>
<ellipse cx="23.1" cy="15.5" rx="8.7" ry="8.5" fill="url(#bkD)" stroke="#a2a5a8" stroke-width="0.6" transform="rotate(-15 23.1 15.5)"/>
<path d="M23.1 15.5 L31.4 13 Q32 16.4 30.6 19 Z" fill="#f0e070" opacity="0.8"/>
<path d="M23.1 15.5 L30.6 10.6 Q31.2 11.8 31.4 13 Z" fill="#e890d0" opacity="0.7"/>
<path d="M23.1 15.5 L15.4 19 Q16.4 21.8 18 22.8 Z" fill="#c8a0d8" opacity="0.6"/>
<circle cx="22.8" cy="15.6" r="2.7" fill="#d0d3d6" stroke="#9a9da0" stroke-width="0.5"/>
<circle cx="22.8" cy="15.6" r="1.1" fill="#fff" stroke="#888" stroke-width="0.4"/>
<path d="M4.2 0 Q11.6 3 11 11.6 L13.2 13 L6.6 18.6 L2.8 10 L5.4 10.6 Q7 5 4.2 0 Z" fill="url(#bkG)"/>
<path d="M17.8 0.8 L21.4 8.8 L19 8.4 Q17.6 15 20.8 22.6 Q15.6 20 14.8 9.2 L12 8.6 Z" fill="url(#bkG)"/>
</svg></div>
<div class="lb" style="left:813px;top:140px;letter-spacing:-0.502px;word-spacing:0.502px">Backup and Restore</div>
<div class="lb" style="left:813px;top:161px;letter-spacing:0.0px;word-spacing:-0.0px">(Windows 7)</div>
<div class="ic" style="left:770px;top:193px"><svg width="32" height="32" viewBox="0 0 32 32">
<defs><linearGradient id="dfB" x1="0" y1="0" x2="1" y2="1"><stop offset="0" stop-color="#2d8ae8"/><stop offset="1" stop-color="#0f6ad8"/></linearGradient></defs>
<rect x="2.5" y="5.6" width="27" height="19.8" fill="#fbfbfb" stroke="#7f8387" stroke-width="1"/>
<rect x="3" y="6.1" width="26" height="1.4" fill="#7f8387"/>
<rect x="24" y="6.2" width="1" height="0.9" fill="#fff"/><rect x="25.8" y="6.2" width="1" height="0.9" fill="#fff"/><rect x="27.6" y="6.2" width="1" height="0.9" fill="#fff"/>
<rect x="3" y="7.5" width="4.8" height="17.4" fill="#ebebeb"/>
<g fill="#9c9c9e"><rect x="4.2" y="10.1" width="2.8" height="0.9"/><rect x="4.2" y="13.1" width="2.8" height="0.9"/><rect x="4.2" y="16.1" width="2.8" height="0.9"/><rect x="4.2" y="19.1" width="2.8" height="0.9"/></g>
<rect x="8.9" y="9" width="11.1" height="13.8" fill="url(#dfB)"/>
<g fill="#9c9c9e"><rect x="21.2" y="10.1" width="6.8" height="0.8"/><rect x="21.2" y="12.2" width="6.8" height="0.8"/><rect x="21.2" y="14.2" width="6.8" height="0.8"/></g>
<circle cx="22.8" cy="22.8" r="8.6" fill="#fff"/>
<circle cx="22.8" cy="22.8" r="7.8" fill="#11a011" stroke="#0a7a0a" stroke-width="0.7"/>
<path d="M18.2 23.6 L21.2 26.2 L26.8 20.6" fill="none" stroke="#fff" stroke-width="1.9"/>
</svg></div>
<div class="lb" style="left:813px;top:200px;letter-spacing:-0.175px;word-spacing:0.175px">Default Programs</div>
<div class="ic" style="left:770px;top:243px"><svg width="32" height="32" viewBox="0 0 32 32">
<defs><linearGradient id="feB" x1="0" y1="0" x2="1" y2="0"><stop offset="0" stop-color="#fbe28c"/><stop offset="1" stop-color="#fbdf84"/></linearGradient></defs>
<rect x="5.6" y="2.6" width="19.8" height="26.8" fill="url(#feB)" stroke="#f0cb52" stroke-width="1"/>
<rect x="7.6" y="3.2" width="1.2" height="25.8" fill="#fef2c0"/>
<path d="M23.2 29.4 V20.4 L25.3 17.2 L27.4 19.8 V29.4 Z" fill="#f8d468" stroke="#f0cb52" stroke-width="0.9"/>
<rect x="14.8" y="4.9" width="14.8" height="10.4" fill="#fdfdfd" stroke="#70787f" stroke-width="1.2"/>
<rect x="15.2" y="5.2" width="14" height="1.3" fill="#70787f"/>
<rect x="26.2" y="5.4" width="0.9" height="0.8" fill="#fff"/><rect x="27.8" y="5.4" width="0.9" height="0.8" fill="#fff"/>
<path d="M17 8.4 L18.2 9.6 L20.4 7.4" fill="none" stroke="#2a8ae8" stroke-width="1.2"/>
<path d="M17 12.2 L18.2 13.4 L20.4 11.2" fill="none" stroke="#2a8ae8" stroke-width="1.2"/>
<rect x="22.2" y="8" width="5" height="0.8" fill="#c0c2c4"/><rect x="22.2" y="12" width="5" height="0.8" fill="#c0c2c4"/>
</svg></div>
<div class="lb" style="left:813px;top:250px;letter-spacing:-0.27px;word-spacing:0.27px">File Explorer Options</div>
<div class="ic" style="left:770px;top:293px"><svg width="32" height="32" viewBox="0 0 32 32">
<defs><radialGradient id="inG" cx="0.38" cy="0.32" r="0.7"><stop offset="0" stop-color="#8af4ff"/><stop offset="0.4" stop-color="#2a8cf0"/><stop offset="1" stop-color="#1a2cb0"/></radialGradient>
<clipPath id="inC"><circle cx="12.4" cy="12.7" r="12.6"/></clipPath>
<linearGradient id="inW" x1="0" y1="0" x2="1" y2="0"><stop offset="0" stop-color="#ffffff"/><stop offset="1" stop-color="#e9e9eb"/></linearGradient></defs>
<circle cx="12.4" cy="12.7" r="12.6" fill="url(#inG)"/>
<g clip-path="url(#inC)" fill="#35b82a">
<path d="M1 10 Q2 4 7 1.6 Q10 0.4 12.6 1 Q11.4 3 9.4 4 Q8.6 6.6 6 8 Q4.8 11 2.4 12 Z"/>
<path d="M19.4 3 Q23 5 24.6 9 Q25.4 12 24.8 14.6 Q22.4 14 21.6 11 Q20.4 7 19.4 3 Z"/>
<path d="M3.4 16.6 Q6 15 8.6 16.4 Q10 19 9 22.4 Q7 24 5 22.6 Q3 20 3.4 16.6 Z"/>
<path d="M12.6 0.4 Q14.6 0.2 15.6 1.2 Q14.4 2.2 13 1.8 Z"/>
</g>
<path d="M5 7 Q7 4.4 10 3.4 Q8.4 5.6 7.6 7.4 Z" fill="#e8f088" opacity="0.8"/>
<rect x="9.7" y="12.8" width="20.8" height="17.4" rx="0.8" fill="url(#inW)" stroke="#878b93" stroke-width="1.1"/>
<rect x="10.3" y="13.4" width="19.6" height="1.4" fill="#dfe3ea"/>
<rect x="24" y="13.5" width="1.1" height="1" fill="#4c5b78"/><rect x="26" y="13.5" width="1.1" height="1" fill="#4c5b78"/><rect x="28" y="13.5" width="1.1" height="1" fill="#4c5b78"/>
<path d="M12.4 19 L14.4 21.4 L18.4 15.6" fill="none" stroke="#1a82c4" stroke-width="1.7"/>
<path d="M12.4 24.4 L14.4 26.8 L18.4 21.2" fill="none" stroke="#1a82c4" stroke-width="1.7"/>
<rect x="17.4" y="20.6" width="1.4" height="1.2" fill="#3cc23c"/>
<rect x="20.3" y="20.1" width="6.6" height="1.1" fill="#5a5082"/><rect x="20.3" y="25.1" width="6.6" height="1.1" fill="#5a5082"/>
</svg></div>
<div class="lb" style="left:813px;top:300px;letter-spacing:-0.025px;word-spacing:0.025px">Internet Options</div>
<div class="ic" style="left:770px;top:343px"><svg width="32" height="32" viewBox="0 0 32 32">
<defs><linearGradient id="phB" x1="0" y1="0" x2="1" y2="1"><stop offset="0" stop-color="#f1f3f5"/><stop offset="1" stop-color="#cfd4d9"/></linearGradient>
<linearGradient id="phM" x1="0" y1="0" x2="0" y2="1"><stop offset="0" stop-color="#d4d7da"/><stop offset="1" stop-color="#8f9397"/></linearGradient></defs>
<path d="M1.4 21.6 L17 24.4 L30 19.4 L30 23 L17.6 30 L1.4 26.6 Z" fill="url(#phM)"/>
<path d="M1.4 21.6 L14 17 L30 19.4 L17 24.4 Z" fill="#dfe2e5"/>
<path d="M17 24.4 L30 19.4 L30 23 L17.6 30 Z" fill="#9fa3a7"/>
<path d="M3.4 24 L15 26.2 L15 28 L3.4 25.8 Z" fill="#6f8fa8"/>
<g fill="#2f9fe4"><rect x="4.2" y="24.5" width="1.3" height="1.3"/><rect x="6.4" y="24.9" width="1.3" height="1.3"/><rect x="8.6" y="25.3" width="1.3" height="1.3"/><rect x="10.8" y="25.7" width="1.3" height="1.3"/><rect x="13" y="26.1" width="1.3" height="1.3"/></g>
<path d="M16.8 22.2 L27 9.6 L27.8 15.6 L21.4 22.4 Z" fill="#9a9ea3"/>
<path d="M5.4 20.2 L13 7 L27 9.6 L16.8 22.2 Z" fill="url(#phB)" stroke="#9a9ea2" stroke-width="0.6"/>
<path d="M14.4 8.6 L23.8 9.8 L22.4 12.4 L13.2 11.2 Z" fill="#2c8ce8"/>
<path d="M14.8 9 L23.2 10 L22.8 10.8 L14.4 9.8 Z" fill="#7cbcf4"/>
<g fill="#8aa0c0"><rect x="12.6" y="13.4" width="1.6" height="1.1"/><rect x="15.6" y="13.9" width="1.6" height="1.1"/><rect x="18.6" y="14.4" width="1.6" height="1.1"/><rect x="11.2" y="15.6" width="1.6" height="1.1"/><rect x="14.2" y="16.1" width="1.6" height="1.1"/><rect x="17.2" y="16.6" width="1.6" height="1.1"/><rect x="9.8" y="17.8" width="1.6" height="1.1"/><rect x="12.8" y="18.3" width="1.6" height="1.1"/><rect x="15.8" y="18.8" width="1.6" height="1.1"/></g>
<path d="M14.6 7.2 L8.6 17.6" stroke="#2e2e30" stroke-width="1.4"/>
<path d="M13.6 5.6 Q15.2 5.2 15 6.6 L6 19.2 Q4.4 20.6 3 19.6 Q2 18.4 3 17 L11.4 7.2 Q12.4 5.8 13.6 5.6 Z" fill="#e2e5e8" stroke="#8f9397" stroke-width="0.6"/>
</svg></div>
<div class="lb" style="left:813px;top:350px;letter-spacing:-0.253px;word-spacing:0.253px">Phone and Modem</div>
<div class="ic" style="left:770px;top:393px"><svg width="32" height="32" viewBox="0 0 32 32">
<defs><radialGradient id="rgG" cx="0.38" cy="0.35" r="0.7"><stop offset="0" stop-color="#7af0ff"/><stop offset="0.4" stop-color="#2a8cf0"/><stop offset="1" stop-color="#16229c"/></radialGradient>
<clipPath id="rgC"><circle cx="18.4" cy="11.7" r="11.5"/></clipPath>
<radialGradient id="rgK" cx="0.4" cy="0.35" r="0.8"><stop offset="0" stop-color="#ffffff"/><stop offset="0.75" stop-color="#e6e8ea"/><stop offset="1" stop-color="#c4c8cc"/></radialGradient></defs>
<ellipse cx="24" cy="22.6" rx="6" ry="1.6" fill="#9aa6b2" opacity="0.5"/>
<circle cx="18.4" cy="11.7" r="11.5" fill="url(#rgG)"/>
<g clip-path="url(#rgC)" fill="#35b82a">
<path d="M7.4 10 Q8.4 4.6 13 2 Q15.4 0.6 17.6 0.8 Q16.8 2.6 15 3.6 Q14.4 6 12 7.4 Q11.4 10 9.4 11.4 Q8 11.4 7.4 10 Z"/>
<path d="M27 5.6 Q29.4 7.4 29.8 11 Q29.8 14 28.6 15.2 Q26.8 14.6 26.6 11.6 Q26.4 8.4 27 5.6 Z"/>
<path d="M17 17.6 Q19 17.2 20.4 18.4 Q20 20.6 18.4 21.6 Q17 20 17 17.6 Z"/>
<path d="M18 0.4 Q20 0.2 20.6 1.4 Q19.4 2.2 18.2 1.8 Z"/>
</g>
<path d="M11.4 6.4 Q13 4.2 15.4 3.4 Q14 5.2 13.4 6.8 Z" fill="#eef29a" opacity="0.85"/>
<circle cx="10.2" cy="21.5" r="10.1" fill="#c3c7cb"/>
<circle cx="10.2" cy="21.5" r="9.3" fill="url(#rgK)"/>
<g fill="#8ea0ae"><circle cx="10.20" cy="13.70" r="0.45"/><circle cx="14.10" cy="14.75" r="0.45"/><circle cx="16.95" cy="17.60" r="0.45"/><circle cx="18.00" cy="21.50" r="0.45"/><circle cx="16.95" cy="25.40" r="0.45"/><circle cx="14.10" cy="28.25" r="0.45"/><circle cx="10.20" cy="29.30" r="0.45"/><circle cx="6.30" cy="28.25" r="0.45"/><circle cx="3.45" cy="25.40" r="0.45"/><circle cx="2.40" cy="21.50" r="0.45"/><circle cx="3.45" cy="17.60" r="0.45"/><circle cx="6.30" cy="14.75" r="0.45"/></g>
<path d="M10.4 13.8 V21.5 H16.2" fill="none" stroke="#4a6a7a" stroke-width="1.2"/>
</svg></div>
<div class="lb" style="left:813px;top:400px;letter-spacing:-0.28px;word-spacing:0.28px">Region</div>
<div class="ic" style="left:770px;top:443px"><svg width="32" height="32" viewBox="0 0 32 32">
<defs><linearGradient id="spM" x1="0" y1="0" x2="1" y2="0"><stop offset="0" stop-color="#8e8ea6"/><stop offset="0.3" stop-color="#f6f6ff"/><stop offset="0.6" stop-color="#e4e4f2"/><stop offset="1" stop-color="#7e7e96"/></linearGradient></defs>
<path d="M7.2 13.4 L8.6 13 L8.6 21.4 L15 26.4 V30 H14 V30.8 H18.6 V30 H17.6 V26.4 L24 21.4 V13 L25.4 13.4" fill="#f4f4f8" stroke="#7c7c8c" stroke-width="1.2" stroke-linejoin="round"/>
<rect x="11" y="0.5" width="10.7" height="23.6" rx="5.35" fill="url(#spM)" stroke="#8a8aa0" stroke-width="0.5"/>
<g stroke="#80808f" stroke-width="0.8"><path d="M11.4 8.6 H21.4 M11.4 10.2 H21.4 M11.4 11.9 H21.4 M11.4 13.7 H21.4 M11.4 15.5 H21.4"/></g>
</svg></div>
<div class="lb" style="left:813px;top:450px;letter-spacing:-0.382px;word-spacing:0.382px">Speech Recognition</div>
<div class="ic" style="left:770px;top:493px"><svg width="32" height="32" viewBox="0 0 32 32">
<defs><linearGradient id="tbT" x1="0" y1="0" x2="0" y2="1"><stop offset="0" stop-color="#7484a4"/><stop offset="0.25" stop-color="#4a5a7c"/><stop offset="1" stop-color="#17264a"/></linearGradient></defs>
<rect x="0.7" y="0.8" width="16.8" height="20.5" fill="#fafafa" stroke="#808080" stroke-width="1.2"/>
<rect x="13.9" y="1" width="2" height="0.8" fill="#e0383e"/>
<path d="M3.4 5.2 L4.9 7.2 L8.4 3.4" fill="none" stroke="#1a8ae2" stroke-width="1.6"/>
<path d="M3.4 10.4 L4.9 12.4 L8.4 8.4" fill="none" stroke="#1a8ae2" stroke-width="1.6"/>
<rect x="3.6" y="15.6" width="2.9" height="2.9" fill="#fff" stroke="#b0b0b0" stroke-width="0.7"/>
<g fill="#a6a6a6"><rect x="10.2" y="6" width="2.8" height="1"/><rect x="10.2" y="11" width="2.8" height="1"/><rect x="10.2" y="16.1" width="2.8" height="1"/></g>
<rect x="0.1" y="23.1" width="31.9" height="8.6" fill="url(#tbT)"/>
<g fill="#aeb6c6"><rect x="14" y="26.2" width="2.8" height="2.9"/><rect x="20" y="26.2" width="2.8" height="2.9"/><rect x="26" y="26.2" width="2.8" height="2.9"/></g>
<g stroke="#4a5a7c" stroke-width="0.4"><path d="M15.4 26.2 v2.9 M14 27.65 h2.8 M21.4 26.2 v2.9 M20 27.65 h2.8 M27.4 26.2 v2.9 M26 27.65 h2.8"/></g>
</svg></div>
<div class="lb" style="left:813px;top:500px;letter-spacing:-0.262px;word-spacing:0.262px">Taskbar and Navigation</div>
<div class="ic" style="left:770px;top:543px"><svg width="32" height="32" viewBox="0 0 32 32">
<defs><linearGradient id="mbW" x1="0" y1="0" x2="1" y2="0"><stop offset="0" stop-color="#ffffff"/><stop offset="1" stop-color="#ececee"/></linearGradient>
<linearGradient id="mbS" x1="0" y1="0" x2="1" y2="0.4"><stop offset="0" stop-color="#1a28c0"/><stop offset="0.45" stop-color="#2a40d4"/><stop offset="0.55" stop-color="#5a7cec"/><stop offset="1" stop-color="#2c48d8"/></linearGradient>
<linearGradient id="mbB" x1="0" y1="0" x2="0" y2="1"><stop offset="0" stop-color="#b4b8bc"/><stop offset="1" stop-color="#e4e6e8"/></linearGradient></defs>
<rect x="1.8" y="1.8" width="22.8" height="18.4" rx="0.8" fill="url(#mbW)" stroke="#878b93" stroke-width="1.1"/>
<rect x="2.4" y="2.4" width="21.6" height="1.4" fill="#dfe3ea"/>
<rect x="18.2" y="2.5" width="1.1" height="1" fill="#4c5b78"/><rect x="20.2" y="2.5" width="1.1" height="1" fill="#4c5b78"/><rect x="22.2" y="2.5" width="1.1" height="1" fill="#4c5b78"/>
<g fill="none" stroke="#1a86c8" stroke-width="1.5"><path d="M5.2 6.8 L6.8 8.6 L9.8 4.6"/><path d="M5.2 11.2 L6.8 13 L9.8 9"/><path d="M5.2 15.6 L6.8 17.4 L9.8 13.4"/></g>
<rect x="12.1" y="6.9" width="8" height="1" fill="#4a4082"/><rect x="12.1" y="11" width="2.4" height="1" fill="#4a4082"/><rect x="12.1" y="15" width="1.4" height="1" fill="#4a4082"/>
<path d="M5.1 25.9 L13 21.4 L27.6 24.3 L20.6 31.4 Z" fill="url(#mbB)" stroke="#8a8e92" stroke-width="0.5"/>
<path d="M8.6 25.2 L13.6 22.4 L25.4 24.8 L22 27.8 Z" fill="#4a4c50"/>
<path d="M13 28 L16.4 28.8 L15 30 L11.8 29.2 Z" fill="#d8e4f0"/>
<path d="M15.1 9.6 L30.8 11.4 L28.6 23.9 L13.6 21.3 Z" fill="#8c8e92"/>
<path d="M15.8 10.4 L30 12.1 L28 23 L14.5 20.7 Z" fill="url(#mbS)"/>
</svg></div>
<div class="lb" style="left:813px;top:550px;letter-spacing:-0.019px;word-spacing:0.019px">Windows Mobility Center</div>
</body></html>
